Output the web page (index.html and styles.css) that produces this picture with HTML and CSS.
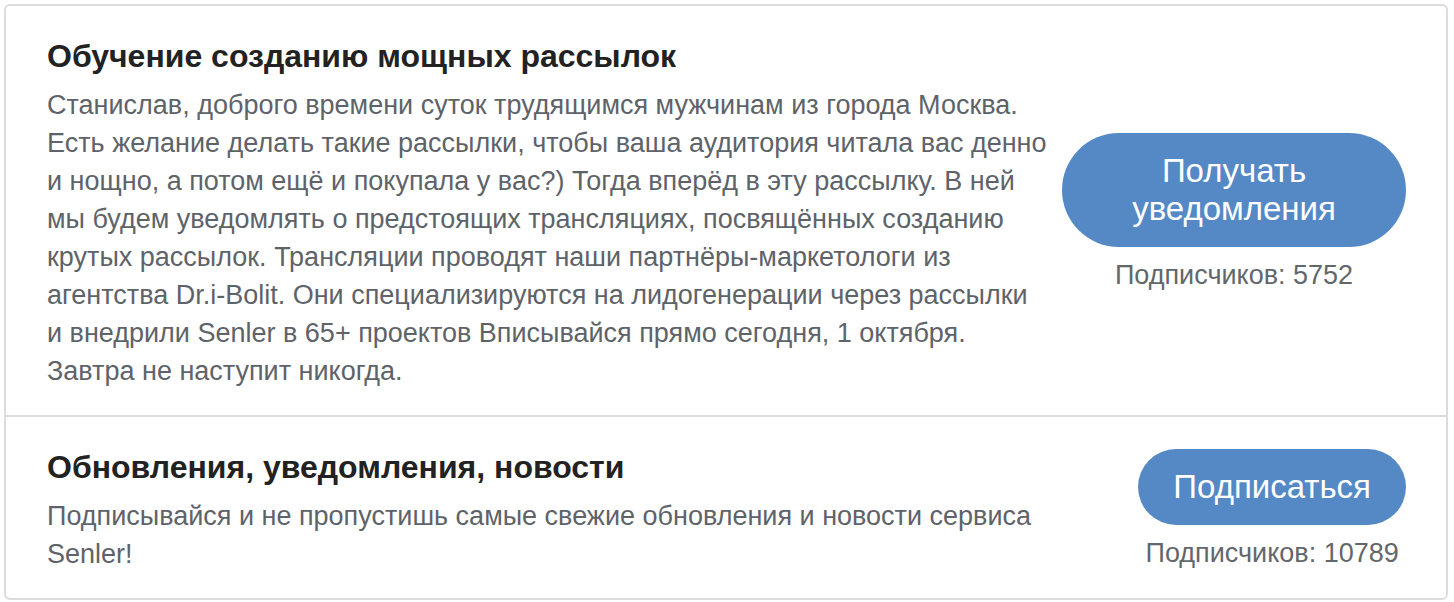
FILE: index.html
```html
<!DOCTYPE html>
<html lang="ru">
<head>
<meta charset="utf-8">
<link rel="stylesheet" href="styles.css">
</head>
<body>
<div class="card">
  <div class="item">
    <div class="info">
      <div class="title">Обучение созданию мощных рассылок</div>
      <div class="desc">Станислав, доброго времени суток трудящимся мужчинам из города Москва. Есть желание делать такие рассылки, чтобы ваша аудитория читала вас денно и нощно, а потом ещё и покупала у вас?) Тогда вперёд в эту рассылку. В ней мы будем уведомлять о предстоящих трансляциях, посвящённых созданию крутых рассылок. Трансляции проводят наши партнёры-маркетологи из агентства Dr.i-Bolit. Они специализируются на лидогенерации через рассылки и внедрили Senler в 65+ проектов Вписывайся прямо сегодня, 1 октября. Завтра не наступит никогда.</div>
    </div>
    <div class="action">
      <button class="btn btn-wide">Получать уведомления</button>
      <div class="count">Подписчиков: 5752</div>
    </div>
  </div>
  <div class="item">
    <div class="info">
      <div class="title">Обновления, уведомления, новости</div>
      <div class="desc">Подписывайся и не пропустишь самые свежие обновления и новости сервиса Senler!</div>
    </div>
    <div class="action">
      <button class="btn">Подписаться</button>
      <div class="count">Подписчиков: 10789</div>
    </div>
  </div>
</div>
</body>
</html>
```
FILE: styles.css
```css
html, body {
  margin: 0;
  padding: 0;
  background: #fff;
}
body {
  padding: 4px 6px 0 4px;
  font-family: "Liberation Sans", Arial, sans-serif;
}
.card {
  border: 2px solid #dcdcdc;
  border-radius: 6px;
  background: #fff;
}
.item {
  display: flex;
  align-items: center;
  justify-content: space-between;
  gap: 6px;
  padding: 30px 40px 25px 41px;
}
.item + .item {
  border-top: 2px solid #dcdcdc;
}
.info {
  flex: 1;
  min-width: 0;
  max-width: 1001px;
}
.title {
  font-size: 32px;
  font-weight: 700;
  color: #222;
  line-height: 40px;
  margin-bottom: 10px;
}
.desc {
  font-size: 27px;
  line-height: 38px;
  color: #5e6369;
}
.action {
  display: flex;
  flex-direction: column;
  align-items: center;
  flex: none;
}
.btn {
  border: none;
  background: #5589c6;
  color: #fff;
  font-family: inherit;
  font-size: 33px;
  line-height: 38px;
  padding: 19px 35px;
  border-radius: 60px;
}
.btn-wide {
  width: 344px;
}
.count {
  margin-top: 10px;
  font-size: 27px;
  line-height: 36px;
  color: #62676c;
}
```
